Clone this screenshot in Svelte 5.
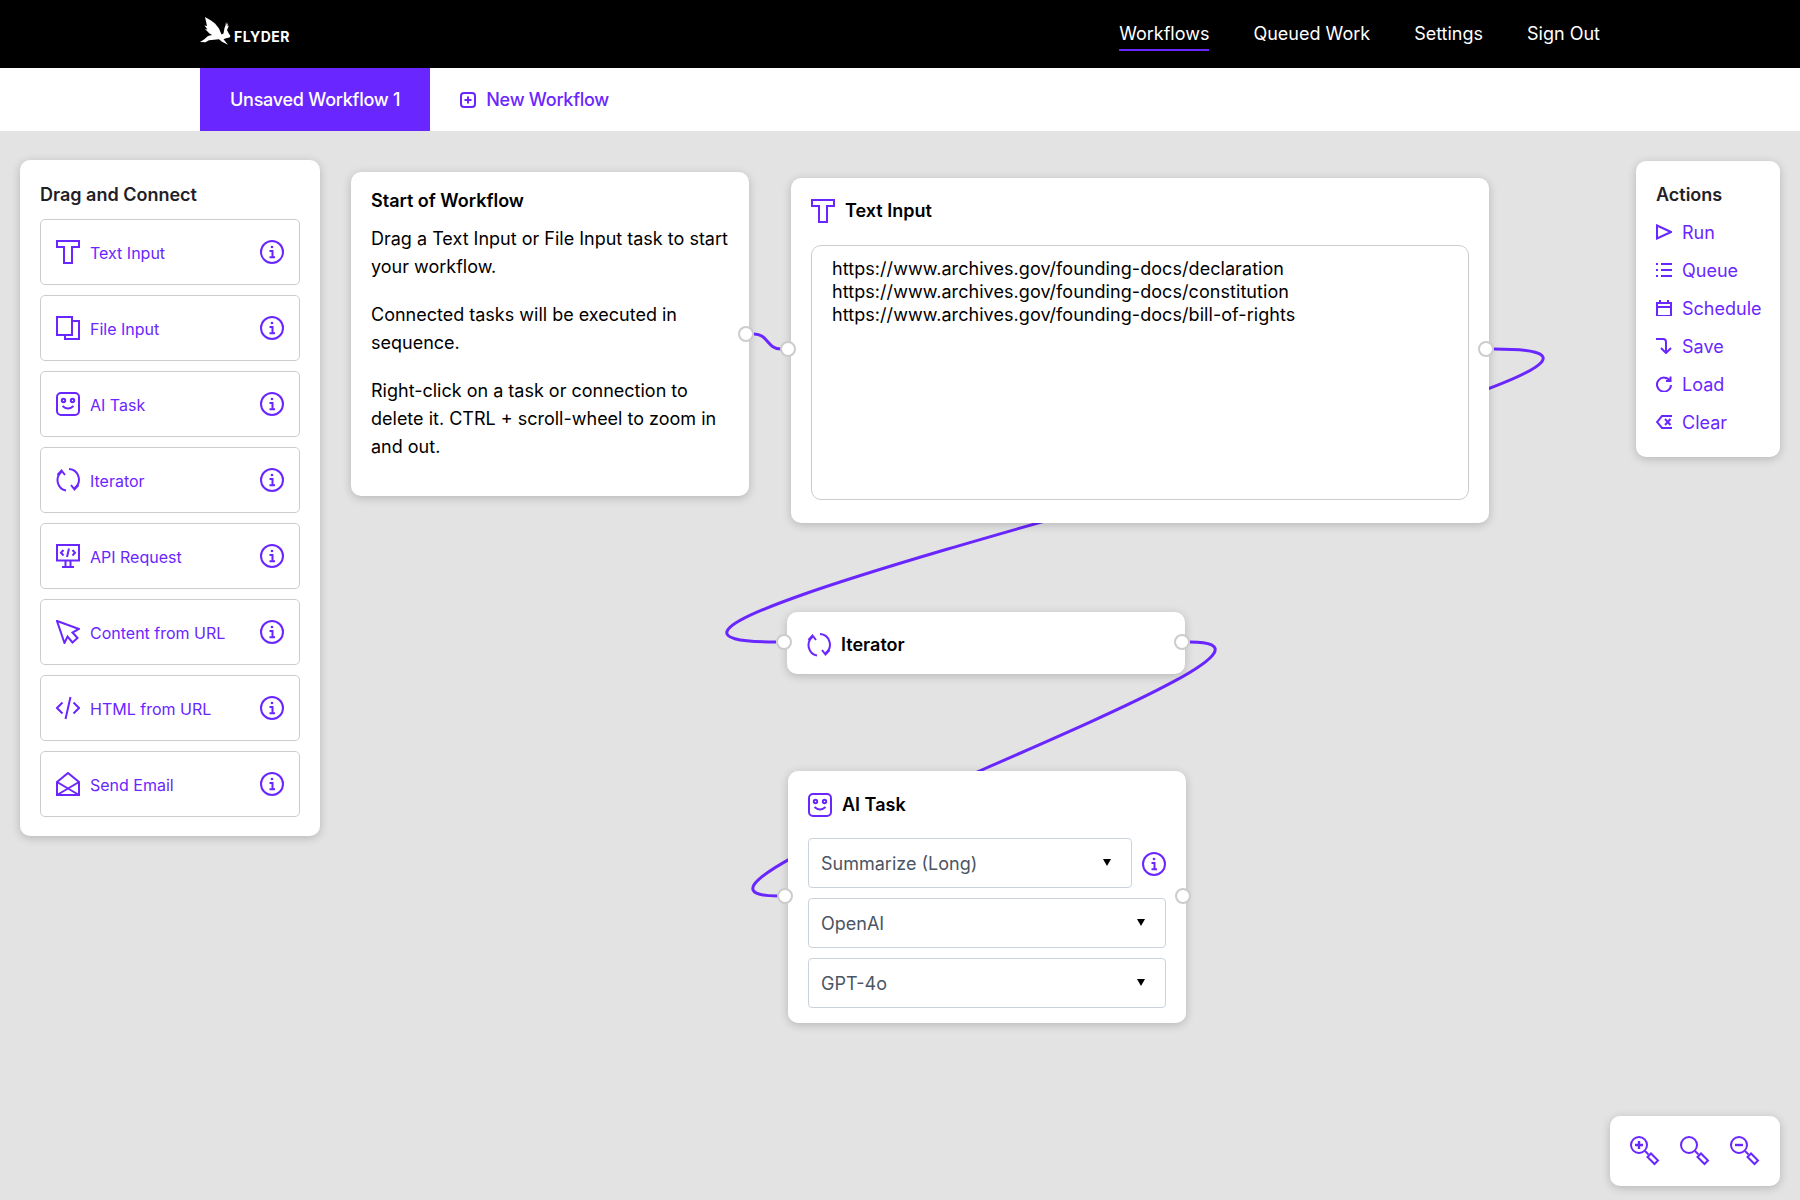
<script>
	const lens = '<circle cx="9" cy="9" r="8"/><path d="M15 15l3.5 3.5"/><path d="M17.5 21l3.5-3.5 7 7-3.5 3.5z"/>';

	const icons = {
		text: '<path d="M1 1h22v6h-7v16H8V7H1z"/>',
		file: '<rect x="1" y="1" width="15" height="18"/><path d="M16 5h7v18H9v-4"/>',
		ai: '<rect x="1" y="1" width="22" height="22" rx="4"/><circle cx="7.5" cy="8.5" r="1.7"/><circle cx="16.5" cy="8.5" r="1.7"/><path d="M6.5 14q5.5 5 11 0"/>',
		iterator: '<path d="M5.5 4A10.5 10.5 0 0 0 10 22.5M13 1A10.5 10.5 0 0 1 18.5 20"/><path d="M1.5 7l4-4.5 3.5 4.5M15 17l3.5 4.5 4-4.5"/>',
		api: '<rect x="1" y="1" width="22" height="15.5"/><path d="M9.5 16.5v6M14.5 16.5v6M6 23h12M7.5 6L5 8.8l2.5 2.7M16.5 6L19 8.8l-2.5 2.7M13 4.5l-2 8.5"/>',
		cursor: '<path d="M1 1l22 8-6.5 3.5 5 5.5-5 4.5-5-6L8.5 23z"/>',
		code: '<path d="M6.5 6.5L1 12l5.5 5.5M17.5 6.5L23 12l-5.5 5.5M14.5 1L9.5 23"/>',
		mail: '<path d="M1 10L12 1l11 9v13H1zM1 10l22 13M23 10L1 23"/>',
		plus: '<rect x="1" y="1" width="14" height="14" rx="3"/><path d="M8 4.5v7M4.5 8h7"/>',
		run: '<path d="M1 1.5L15 8 1 14.5z"/>',
		queue: '<path d="M5 2h11M5 8h11M5 14h11M0 2h2M0 8h2M0 14h2"/>',
		schedule: '<path d="M1 3h14v13H1zM1 7h14M4 0v3M12 0v3"/>',
		save: '<path d="M0 1h7a3 3 0 0 1 3 3v11M5 10l5 5 5-5"/>',
		load: '<path d="M14 5A7 7 0 1 0 15 9M14.5 0.5V5H10"/>',
		clear: '<path d="M16 2H6L1 8l5 6h10M9 5l5.5 6M14.5 5L9 11"/>',
		zoomIn: lens + '<path d="M5 9h8M9 5v8" stroke-width="2.4"/>',
		zoomReset: lens,
		zoomOut: lens + '<path d="M5 9h8" stroke-width="2.4"/>'
	};

	const nav = ['Workflows', 'Queued Work', 'Settings', 'Sign Out'];

	const tasks = [
		['Text Input', 'text'],
		['File Input', 'file'],
		['AI Task', 'ai'],
		['Iterator', 'iterator'],
		['API Request', 'api'],
		['Content from URL', 'cursor'],
		['HTML from URL', 'code'],
		['Send Email', 'mail']
	];

	const actions = [
		['Run', 'run'],
		['Queue', 'queue'],
		['Schedule', 'schedule'],
		['Save', 'save'],
		['Load', 'load'],
		['Clear', 'clear']
	];

	const urls = `https://www.archives.gov/founding-docs/declaration
https://www.archives.gov/founding-docs/constitution
https://www.archives.gov/founding-docs/bill-of-rights`;
</script>

{#snippet icon(name, size = 24, box = 24)}
	<svg class="icon" width={size} height={size} viewBox="0 0 {box} {box}">{@html icons[name]}</svg>
{/snippet}

{#snippet info()}
	<svg class="icon info" width="24" height="24" viewBox="0 0 24 24">
		<circle cx="12" cy="12" r="11" />
		<circle cx="12" cy="7" r="1.3" fill="currentColor" stroke="none" />
		<path d="M9.5 11H12.5V17M9.5 17.2H15" />
	</svg>
{/snippet}

<div class="page">
	<header class="topbar">
		<div class="brand">
			<svg class="logo" width="32" height="32" viewBox="0 0 32 32">
				<path d="M5 2l6 3.5 4 3 4 5 2.5 6 2-1 1-5.500 1-2.500.5-3.500.8 3 1.200-2.500-.5 4 1.500-1-2 4.500 1.500 3 2 3-1 1.500-3.500.8-2.500 1 4.500 5.500-6-3-3-2.500-5 .5-5 .5-3.500 2L0 27l4-2.500 4-3.500 4-1-4-2.500 1 .5-4-4 2.500.5-3-4 2.500.5z" />
			</svg>
			<span>FLYDER</span>
		</div>
		<nav>
			{#each nav as item, i}
				<span class="nav-item" class:current={i === 0}>{item}</span>
			{/each}
		</nav>
	</header>

	<div class="tabs">
		<div class="tab active">Unsaved Workflow 1</div>
		<div class="tab new">{@render icon('plus', 16, 16)}New Workflow</div>
	</div>

	<main class="canvas">
		<svg class="wires" width="1800" height="1069" viewBox="0 131 1800 1069">
			<path d="M754 334C768 334 767 349 781 349" />
			<path d="M1494 349C1814 349 456 642 776 642" />
			<path d="M1190 642C1360 642 608 896 778 896" />
		</svg>

		<aside class="panel palette">
			<h2>Drag and Connect</h2>
			<ul>
				{#each tasks as [label, name]}
					<li>
						{@render icon(name)}
						<span>{label}</span>
						{@render info()}
					</li>
				{/each}
			</ul>
		</aside>

		<section class="node start">
			<h3>Start of Workflow</h3>
			<p>Drag a Text Input or File Input task to start your workflow.</p>
			<p>Connected tasks will be executed in sequence.</p>
			<p>Right-click on a task or connection to delete it. CTRL + scroll-wheel to zoom in and out.</p>
			<span class="port" style="left: 387px; top: 154px"></span>
		</section>

		<section class="node text-node">
			<h3>{@render icon('text')}Text Input</h3>
			<textarea readonly value={urls}></textarea>
			<span class="port" style="left: -11px; top: 163px"></span>
			<span class="port" style="left: 687px; top: 163px"></span>
		</section>

		<section class="node iterator">
			<h3>{@render icon('iterator')}Iterator</h3>
			<span class="port" style="left: -11px; top: 22px"></span>
			<span class="port" style="left: 387px; top: 22px"></span>
		</section>

		<section class="node ai">
			<h3>{@render icon('ai')}AI Task</h3>
			<div class="select-row">
				<div class="select"><select><option>Summarize (Long)</option></select></div>
				{@render info()}
			</div>
			<div class="select"><select><option>OpenAI</option></select></div>
			<div class="select"><select><option>GPT-4o</option></select></div>
			<span class="port" style="left: -11px; top: 117px"></span>
			<span class="port" style="left: 387px; top: 117px"></span>
		</section>

		<aside class="panel actions">
			<h2>Actions</h2>
			<ul>
				{#each actions as [label, name]}
					<li>{@render icon(name, 16, 16)}<span>{label}</span></li>
				{/each}
			</ul>
		</aside>

		<div class="panel zoom">
			{@render icon('zoomIn', 30, 30)}
			{@render icon('zoomReset', 30, 30)}
			{@render icon('zoomOut', 30, 30)}
		</div>
	</main>
</div>

<style>
	:global(body) {
		margin: 0;
		font-family: Inter, "Liberation Sans", sans-serif;
		color: #000;
	}

	.page {
		display: flex;
		flex-direction: column;
		height: 1200px;
		--purple: #6a26ff;
	}

	.topbar {
		display: flex;
		align-items: center;
		justify-content: space-between;
		height: 68px;
		padding: 0 200px;
		background: #000;
		color: #fff;
	}

	.brand {
		display: flex;
		align-items: flex-end;
		gap: 2px;
		padding-bottom: 6px;
		font-size: 14px;
		font-weight: 700;
		letter-spacing: 0.5px;
	}

	.brand span { line-height: 20px; }

	.logo { fill: #fff; }

	nav {
		display: flex;
		gap: 44px;
		font-size: 18px;
	}

	.nav-item {
		padding: 6px 0 5px;
		border-bottom: 2px solid transparent;
	}

	.nav-item.current { border-bottom-color: var(--purple); }

	.tabs {
		display: flex;
		height: 63px;
		padding-left: 200px;
		background: #fff;
		font-size: 18px;
		font-weight: 500;
		letter-spacing: -0.25px;
	}

	.tab {
		display: flex;
		align-items: center;
		padding: 0 30px;
	}

	.tab.active {
		background: var(--purple);
		color: #fff;
	}

	.tab.new {
		gap: 10px;
		color: var(--purple);
	}

	.canvas {
		position: relative;
		flex: 1;
		overflow: hidden;
		background: #e3e3e3;
	}

	.wires {
		position: absolute;
		inset: 0;
		fill: none;
		stroke: var(--purple);
		stroke-width: 3;
	}

	.icon {
		flex: none;
		fill: none;
		stroke: var(--purple);
		stroke-width: 2;
		color: var(--purple);
	}

	.panel, .node {
		position: absolute;
		box-sizing: border-box;
		background: #fff;
		border-radius: 10px;
		box-shadow: 0 2px 10px rgba(0, 0, 0, 0.2);
	}

	h2, h3 {
		margin: 0;
		font-size: 18px;
		font-weight: 600;
		line-height: 28px;
	}

	h2 { color: #1f2126; }

	ul {
		margin: 0;
		padding: 0;
		list-style: none;
	}

	.palette {
		left: 20px;
		top: 29px;
		width: 300px;
		padding: 21px 20px 19px;
	}

	.palette h2 { margin-bottom: 10px; }

	.palette ul {
		display: flex;
		flex-direction: column;
		gap: 10px;
	}

	.palette li {
		display: flex;
		align-items: center;
		gap: 10px;
		box-sizing: border-box;
		height: 66px;
		padding: 0 15px;
		border: 1px solid #ccc;
		border-radius: 5px;
		font-size: 16px;
		color: var(--purple);
	}

	.palette li span {
		flex: 1;
		padding-top: 2px;
	}

	.node h3 {
		display: flex;
		align-items: center;
		gap: 10px;
	}

	.start {
		left: 351px;
		top: 41px;
		width: 398px;
		height: 324px;
		padding: 15px 20px;
	}

	.start h3 { margin-bottom: 10px; }

	.start p {
		margin: 0 0 20px;
		font-size: 18px;
		line-height: 28px;
	}

	.text-node {
		left: 791px;
		top: 47px;
		width: 698px;
		height: 345px;
		padding: 19px 20px;
	}

	textarea {
		display: block;
		box-sizing: border-box;
		width: 100%;
		height: 255px;
		margin-top: 20px;
		padding: 11px 20px;
		border: 1px solid #ccc;
		border-radius: 10px;
		outline: none;
		resize: none;
		font: 18px/23px Inter, "Liberation Sans", sans-serif;
		letter-spacing: 0.06px;
		color: #000;
	}

	.iterator {
		left: 787px;
		top: 481px;
		width: 398px;
		height: 62px;
		padding: 19px 20px;
	}

	.ai {
		left: 788px;
		top: 640px;
		width: 398px;
		height: 252px;
		padding: 20px;
	}

	.ai h3 { margin-bottom: 19px; }

	.select-row {
		display: flex;
		align-items: center;
		gap: 10px;
	}

	.select {
		position: relative;
		flex: 1;
		margin-bottom: 10px;
	}

	.select-row .icon { margin-bottom: 8px; }

	.select::after {
		content: "";
		position: absolute;
		right: 21px;
		top: 21px;
		border-top: 7px solid #000;
		border-left: 4px solid transparent;
		border-right: 4px solid transparent;
	}

	select {
		display: block;
		box-sizing: border-box;
		width: 100%;
		height: 50px;
		padding: 0 12px;
		appearance: none;
		background: #fff;
		border: 1px solid #cbd2dc;
		border-radius: 4px;
		font: 18px Inter, "Liberation Sans", sans-serif;
		color: #4b5563;
	}

	.port {
		position: absolute;
		box-sizing: border-box;
		width: 16px;
		height: 16px;
		background: #fff;
		border: 2px solid #ccc;
		border-radius: 50%;
	}

	.actions {
		left: 1636px;
		top: 30px;
		width: 144px;
		height: 296px;
		padding: 20px;
	}

	.actions h2 { margin-bottom: 4px; }

	.actions li {
		display: flex;
		align-items: center;
		gap: 10px;
		height: 38px;
		font-size: 18px;
		color: var(--purple);
		white-space: nowrap;
	}

	.zoom {
		display: flex;
		justify-content: space-between;
		align-items: center;
		left: 1610px;
		top: 985px;
		width: 170px;
		height: 70px;
		padding: 0 20px;
	}
</style>
